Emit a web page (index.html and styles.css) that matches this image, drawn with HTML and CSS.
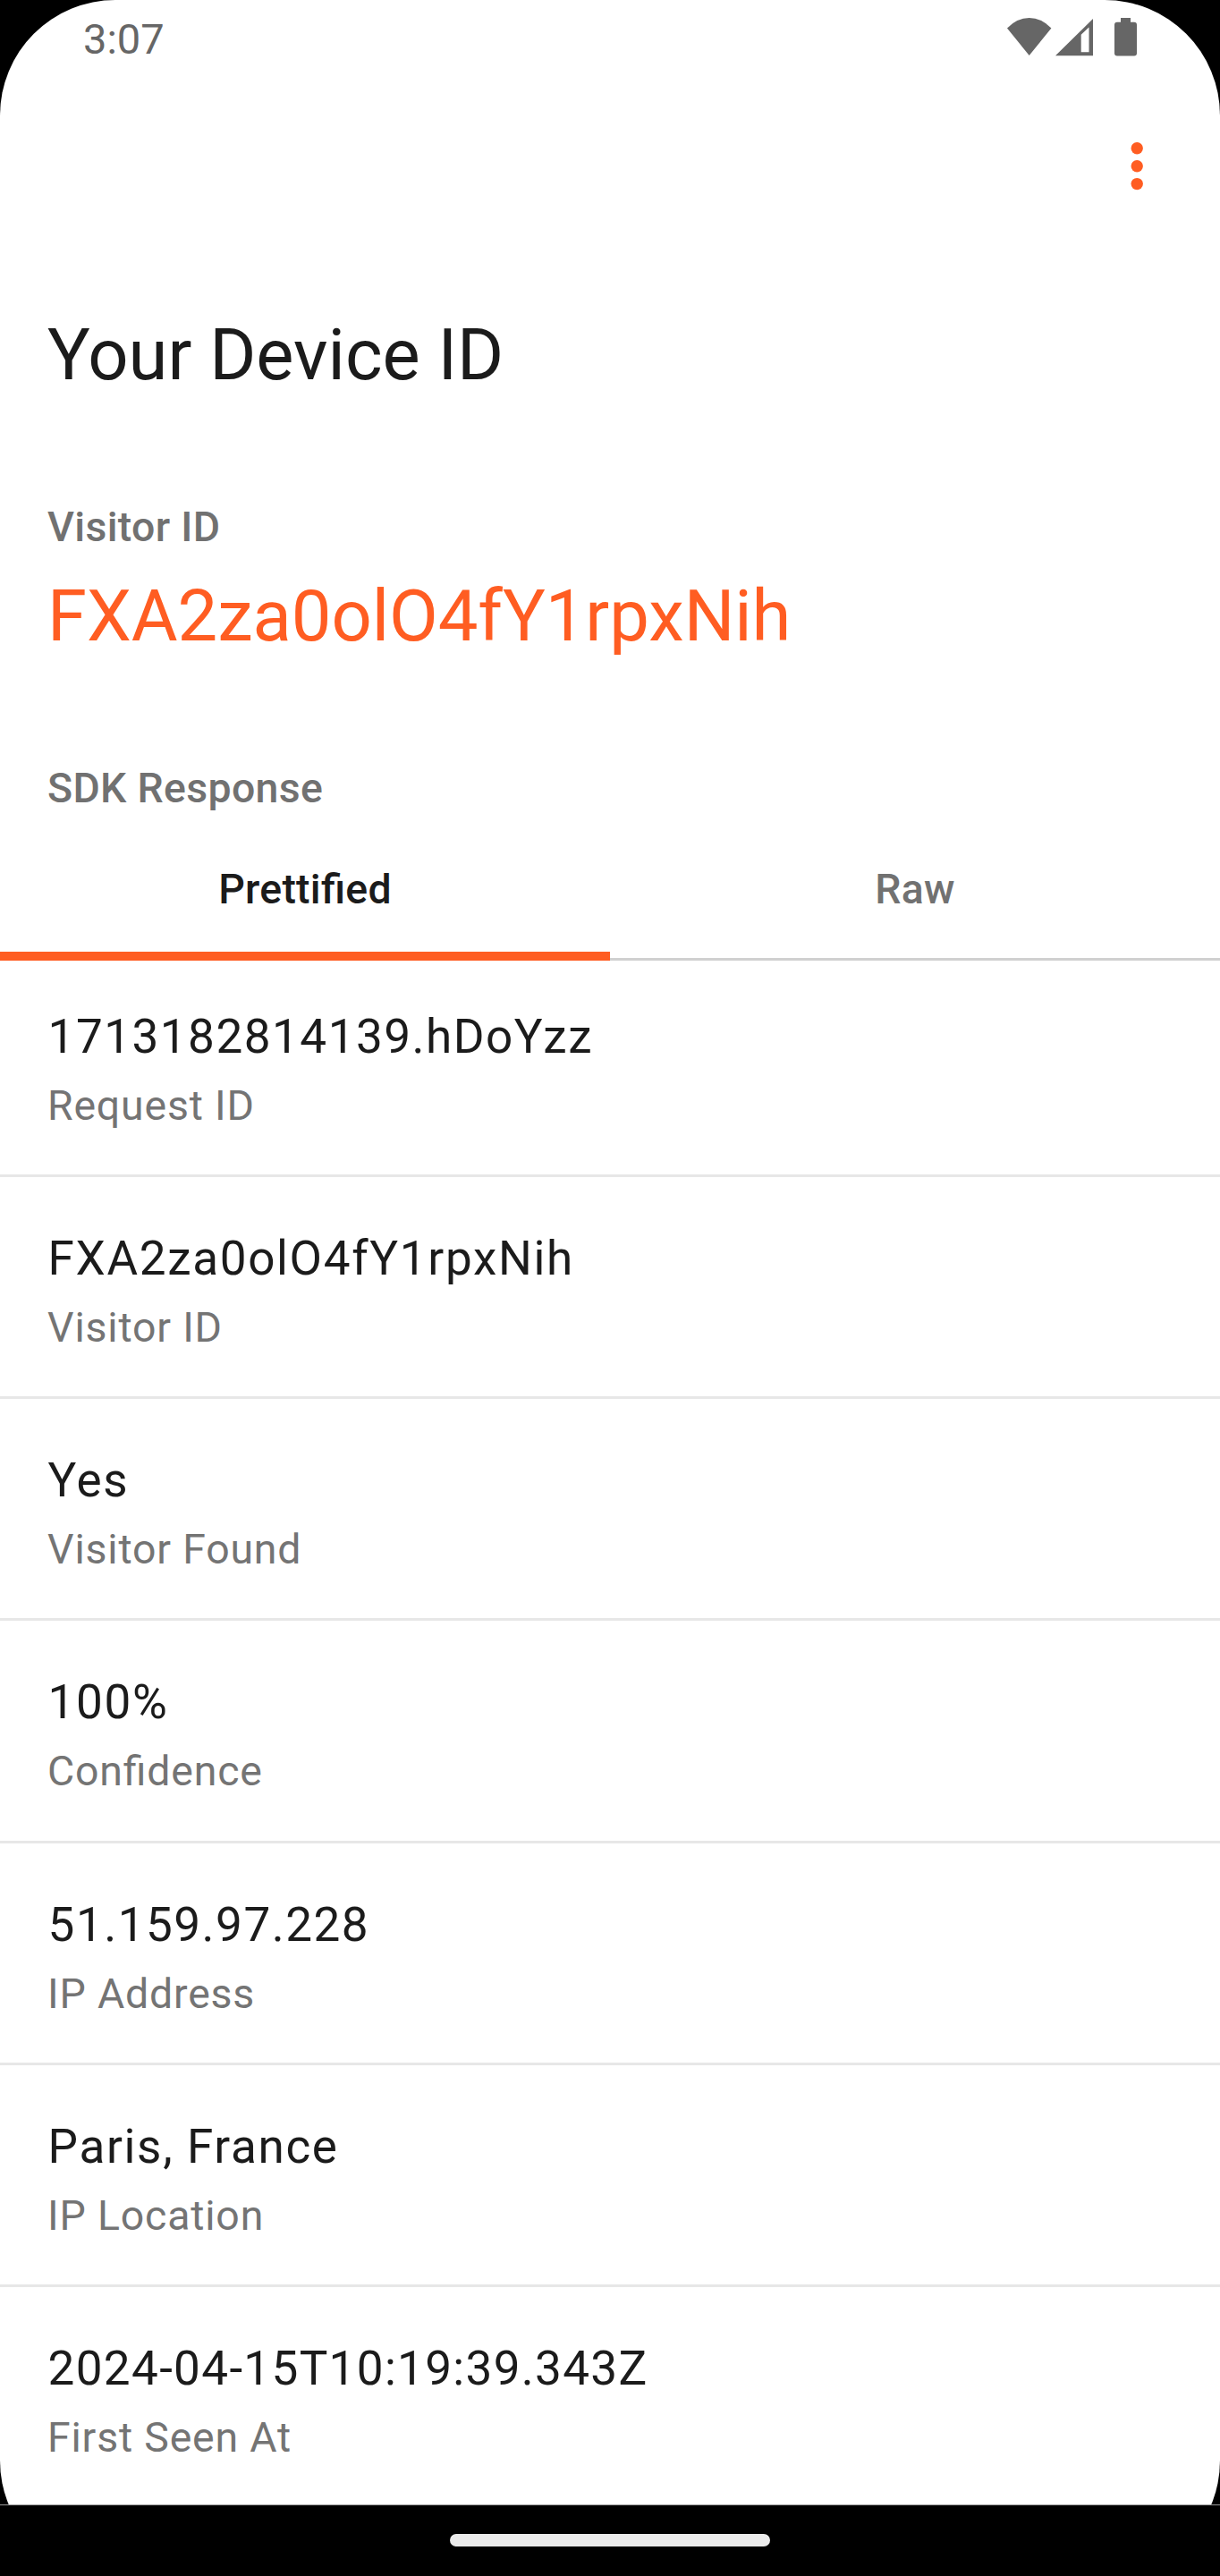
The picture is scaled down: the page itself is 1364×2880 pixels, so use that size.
FILE: index.html
```html
<!DOCTYPE html>
<html lang="en"><head><meta charset="utf-8"><title>Your Device ID</title><link rel="stylesheet" href="styles.css"></head>
<body><div class="phone"><div class="screen">
<header class="status"><span class="clock">3:07</span>
<svg class="status-icons" width="150" height="50" viewBox="0 0 150 50"><path d="M0 11.5Q11 0 24.7 0T49.4 11.5L24.7 42Z"/><path fill-rule="evenodd" d="M54 42.3L96 1V42.3ZM82.7 18.8V38.3H91.5V10.5Z"/><path d="M127 4.7V0H138V4.7H142Q145 4.7 145 7.7V39.6Q145 42.6 142 42.6H123Q120 42.6 120 39.6V7.7Q120 4.7 123 4.7Z"/></svg></header>
<div class="toolbar"><svg width="16" height="56" viewBox="0 0 16 56"><circle cx="8.2" cy="7.8" r="6.7"/><circle cx="8.2" cy="27.7" r="6.7"/><circle cx="8.2" cy="47.6" r="6.7"/></svg></div>
<h1 class="title">Your Device ID</h1>
<h2 class="label">Visitor ID</h2><p class="visitor">FXA2za0olO4fY1rpxNih</p>
<h2 class="label">SDK Response</h2>
<nav class="tabs"><span class="tab active">Prettified</span><span class="tab">Raw</span></nav>
<main class="list">
<div class="row"><p class="value numeric">1713182814139.hDoYzz</p><p class="name">Request ID</p></div>
<div class="row"><p class="value">FXA2za0olO4fY1rpxNih</p><p class="name">Visitor ID</p></div>
<div class="row"><p class="value">Yes</p><p class="name">Visitor Found</p></div>
<div class="row"><p class="value">100%</p><p class="name">Confidence</p></div>
<div class="row"><p class="value numeric">51.159.97.228</p><p class="name">IP Address</p></div>
<div class="row"><p class="value">Paris, France</p><p class="name">IP Location</p></div>
<div class="row"><p class="value timestamp">2024-04-15T10:19:39.343Z</p><p class="name">First Seen At</p></div>
</main></div><footer class="navbar"><div class="handle"></div></footer></div></body></html>
```
FILE: styles.css
```css
*{box-sizing:border-box}
body{margin:0;background:#000;font-family:Roboto,sans-serif;color:#1b1b1b}
h1,h2,p{margin:0;white-space:nowrap}
.phone{width:1364px;height:2880px;display:flex;flex-direction:column;background:#000;overflow:hidden}
/* The display runs on beneath the navigation bar, which covers its lower corners. */
.screen{height:2880px;flex:none;margin-bottom:-80px;background:#fff;border-radius:129px;overflow:hidden}
.status{height:88px;display:flex;justify-content:space-between;padding:20px 88px 0 93px;color:#666}
.clock{font-size:47px;line-height:48px}
.status-icons{fill:#666}
.toolbar{height:196px;display:flex;justify-content:flex-end;padding:70px 85px 0 0;fill:#ff5d22}
.title{font-size:79.56px;line-height:100px;font-weight:400;padding-left:53px;margin-top:63px}
.label{font-size:46.41px;line-height:60px;font-weight:500;letter-spacing:.33px;color:#717171;padding-left:53px;margin-top:112px}
.visitor{font-size:79.56px;line-height:100px;letter-spacing:-.06px;color:#ff5d22;padding-left:53px;margin-top:20px}
.tabs{display:flex;height:162px;margin-top:1px}
.tab{flex:1;text-align:center;font-size:46.41px;font-weight:500;line-height:164px;letter-spacing:.25px;font-feature-settings:"liga";color:#717171;border-bottom:3px solid #d0d0d0}
.active{color:#1b1b1b;border-bottom:10px solid #ff5d22}
.row{height:248.2px;padding:59px 53px 0;border-bottom:3px solid #e7e7e7}
.row:first-child{height:242px;padding-top:53px}
.row:last-child{border-bottom:0}
.value{font-size:53.04px;line-height:64px;letter-spacing:1.66px;padding-left:.6px}
.numeric{letter-spacing:1.5px}
.timestamp{letter-spacing:1.33px}
.name{font-size:46.41px;line-height:60px;letter-spacing:.83px;font-feature-settings:"liga";color:#747474;margin-top:15px}
.navbar{position:relative;height:80px;flex:none;display:flex;justify-content:center;padding-top:32px;background:#000;border-top:1px solid #999}
.handle{width:358px;height:14px;border-radius:7px;background:#ebebeb}
```
